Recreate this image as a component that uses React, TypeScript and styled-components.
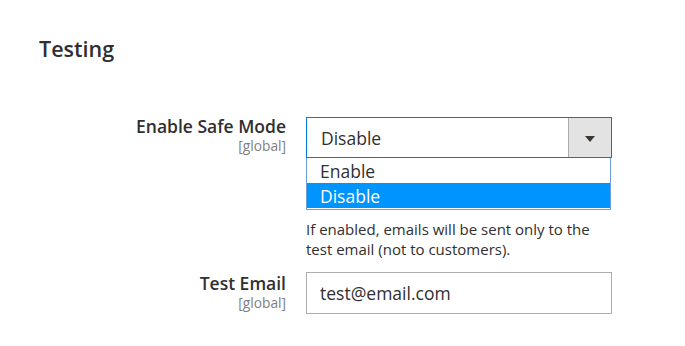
import React from "react";
import styled, { createGlobalStyle } from "styled-components";

const Global = createGlobalStyle`
  html, body { margin: 0; padding: 0; background: #ffffff; }
  body {
    font-family: "Open Sans", "Noto Sans", "Liberation Sans", sans-serif;
    color: #303030;
    -webkit-font-smoothing: antialiased;
  }
`;

const Page = styled.div`
  width: 685px;
  height: 346px;
  box-sizing: border-box;
  padding-top: 34px;
  overflow: hidden;
`;

const Title = styled.h2`
  margin: 0 0 0 39px;
  font-size: 21.5px;
  font-weight: 600;
  line-height: 30px;
  color: #303030;
`;

const Fieldset = styled.div`
  margin-top: 53px;
  display: flex;
  flex-direction: column;
  gap: 13px;
`;

const Row = styled.div`
  display: grid;
  grid-template-columns: 286px 306px;
  column-gap: 20px;
  align-items: start;
`;

const Label = styled.div<{ $offset?: number }>`
  display: flex;
  flex-direction: column;
  align-items: flex-end;
  text-align: right;
  padding-top: ${(p) => p.$offset ?? 0}px;
`;

const LabelText = styled.span`
  font-size: 17.5px;
  font-weight: 600;
  line-height: 18px;
  color: #303030;
`;

const Scope = styled.span`
  margin-top: 3px;
  font-size: 13.75px;
  line-height: 16px;
  color: #808080;
`;

const Control = styled.div`
  display: flex;
  flex-direction: column;
`;

const SelectBox = styled.div`
  box-sizing: border-box;
  height: 41px;
  border: 1px solid #007bdb;
  display: flex;
  align-items: stretch;
  background: #ffffff;
`;

const SelectValue = styled.span`
  flex: 1;
  display: flex;
  align-items: center;
  padding-left: 14px;
  font-size: 17.5px;
  color: #303030;
`;

const ArrowButton = styled.span`
  width: 42px;
  background: #e3e3e3;
  border-left: 1px solid #adadad;
  display: flex;
  align-items: center;
  justify-content: center;
`;

const Triangle = styled.span`
  width: 0;
  height: 0;
  margin-top: 2px;
  border-left: 5px solid transparent;
  border-right: 5px solid transparent;
  border-top: 6px solid #41362f;
`;

const OptionList = styled.ul`
  list-style: none;
  margin: 0;
  padding: 0 0 1px 0;
  box-sizing: border-box;
  width: 305px;
  border: 1px solid #6b9fd9;
  border-top: none;
  background: #ffffff;
`;

const Option = styled.li<{ $selected?: boolean }>`
  height: 25px;
  display: flex;
  align-items: center;
  padding-left: 13px;
  font-size: 17.5px;
  color: ${(p) => (p.$selected ? "#ffffff" : "#303030")};
  background: ${(p) => (p.$selected ? "#0094ff" : "transparent")};
`;

const Note = styled.p`
  margin: 9px 0 0 0;
  font-size: 15px;
  line-height: 20px;
  color: #303030;
  width: 300px;
`;

const TextInput = styled.div`
  box-sizing: border-box;
  height: 42px;
  border: 1px solid #adadad;
  display: flex;
  align-items: center;
  padding-left: 13px;
  font-size: 17.5px;
  color: #303030;
`;

export default function App() {
  return (
    <Page>
      <Global />
      <Title>Testing</Title>
      <Fieldset>
        <Row>
          <Label>
            <LabelText>Enable Safe Mode</LabelText>
            <Scope>[global]</Scope>
          </Label>
          <Control>
            <SelectBox>
              <SelectValue>Disable</SelectValue>
              <ArrowButton>
                <Triangle />
              </ArrowButton>
            </SelectBox>
            <OptionList>
              <Option>Enable</Option>
              <Option $selected>Disable</Option>
            </OptionList>
            <Note>
              If enabled, emails will be sent only to the test email (not to
              customers).
            </Note>
          </Control>
        </Row>
        <Row>
          <Label $offset={2}>
            <LabelText>Test Email</LabelText>
            <Scope>[global]</Scope>
          </Label>
          <Control>
            <TextInput>test@email.com</TextInput>
          </Control>
        </Row>
      </Fieldset>
    </Page>
  );
}
